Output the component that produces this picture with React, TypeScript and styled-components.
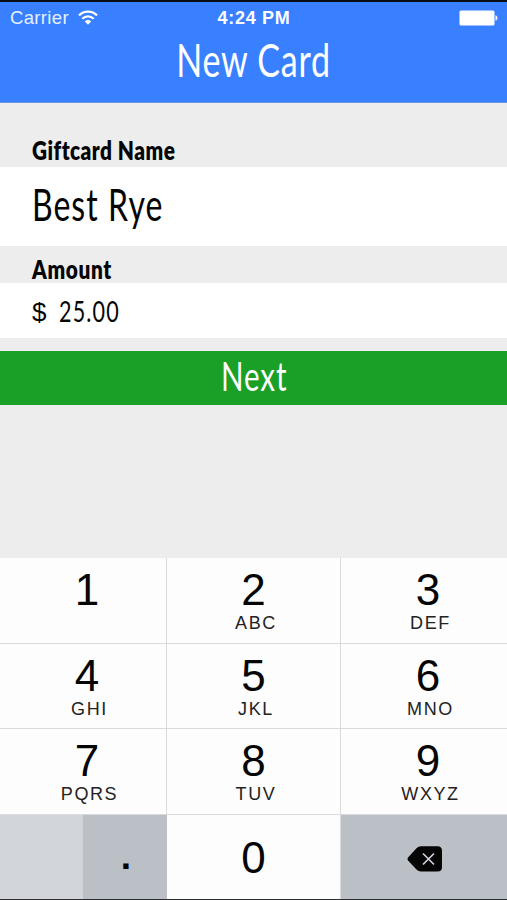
import React from 'react';
import styled, { createGlobalStyle } from 'styled-components';

const GlobalStyle = createGlobalStyle`
  * { box-sizing: border-box; }
  body { margin: 0; background: #ededed; }
`;

const Screen = styled.main`
  width: 507px;
  height: 900px;
  display: flex;
  flex-direction: column;
  overflow: hidden;
  background: #ededed;
  border-top: 2px solid #080d18;
  border-bottom: 1px solid #2c2d30;
  color: #050505;
  font-family: "Liberation Sans", Arial, sans-serif;
`;

const Header = styled.header`
  height: 101px;
  background: #3880ff;
  border-bottom: 1px solid #6b95e2;
  color: #fff;
`;

const StatusBar = styled.div`
  height: 32px;
  display: grid;
  grid-template-columns: 1fr auto 1fr;
  align-items: center;
  padding: 0 9px 0 10px;
`;

const Carrier = styled.div`
  display: flex;
  align-items: center;
  gap: 9px;
  font-size: 18.5px;
  letter-spacing: 0.35px;
  color: #e6f0ff;
`;

const Clock = styled.time`
  padding-top: 1px;
  font-size: 18px;
  font-weight: 700;
  letter-spacing: 0.7px;
`;

const Battery = styled.svg`
  justify-self: end;
`;

const Condensed = styled.span<{
  $size: number;
  $squeeze: number;
  $weight?: number;
  $origin?: string;
  $spacing?: number;
}>`
  display: inline-block;
  font-family: Lato, "Open Sans", sans-serif;
  font-size: ${(p) => p.$size}px;
  font-weight: ${(p) => p.$weight ?? 400};
  letter-spacing: ${(p) => p.$spacing ?? 1}px;
  line-height: 1;
  white-space: nowrap;
  transform: scaleX(${(p) => p.$squeeze});
  transform-origin: ${(p) => p.$origin ?? 'left'} center;
`;

const Title = styled.h1`
  margin: 0;
  height: 51px;
  display: flex;
  align-items: center;
  justify-content: center;
`;

const Label = styled.label<{ $height: number; $bottom: number }>`
  height: ${(p) => p.$height}px;
  display: flex;
  align-items: flex-end;
  padding: 0 0 ${(p) => p.$bottom}px 32px;
`;

const Field = styled.div<{ $height: number; $lift?: number }>`
  height: ${(p) => p.$height}px;
  display: flex;
  align-items: center;
  padding: 0 0 ${(p) => p.$lift ?? 0}px 32px;
  background: #fff;
`;

const Currency = styled.span`
  width: 27px;
  padding-top: 3px;
  font-size: 26px;
  line-height: 1;
`;

const NextButton = styled.button`
  height: 54px;
  margin: 13px 0 0;
  padding: 0 0 5px 2px;
  display: flex;
  align-items: center;
  justify-content: center;
  border: 0;
  background: #1ba027;
  color: #fff;
`;

const Keypad = styled.div`
  margin-top: auto;
  height: 341px;
  display: grid;
  grid-template-columns: 166px 173px 166px;
  grid-template-rows: 85px 84px 85px 84px;
  gap: 1px;
  background: #d9dadc;
`;

const Key = styled.button<{ $shift: number; $plain?: boolean }>`
  display: flex;
  flex-direction: column;
  align-items: center;
  border: 0;
  margin: 0;
  padding: ${(p) => (p.$plain ? 21 : 10)}px 0 0 ${(p) => p.$shift}px;
  background: #fdfdfd;
  color: #050505;
  font-family: inherit;
`;

const Digit = styled.span`
  font-size: 44px;
  line-height: 44px;
`;

const Letters = styled.span`
  margin-top: 1px;
  padding-left: 5px;
  font-size: 18px;
  line-height: 20px;
  letter-spacing: 1.6px;
  color: #222;
`;

const SplitKey = styled.div`
  display: grid;
  grid-template-columns: 83px 84px;
  margin-right: -1px;
`;

const BlankKey = styled.div`
  background: #d2d5da;
`;

const PointKey = styled.button`
  border: 0;
  padding: 0 0 0 2px;
  background: #bbbfc6;
  color: #050505;
  font: 700 37px/72px "Liberation Sans", Arial, sans-serif;
`;

const DeleteKey = styled.button`
  display: flex;
  align-items: center;
  justify-content: center;
  border: 0;
  padding: 4px 0 0 2px;
  background: #bbbfc6;
`;

const keys: [string, string][] = [
  ['1', ''], ['2', 'ABC'], ['3', 'DEF'],
  ['4', 'GHI'], ['5', 'JKL'], ['6', 'MNO'],
  ['7', 'PQRS'], ['8', 'TUV'], ['9', 'WXYZ'],
];
const columnShift = [8, 0, 8];

function WifiIcon() {
  return (
    <svg width="20" height="16" viewBox="0 0 20 16" fill="none" stroke="#fff" strokeWidth="2.2">
      <path d="M1 5.4C6 .3 14 .3 19 5.4" />
      <path d="M4.3 8.8c3.2-3.2 8.2-3.2 11.4 0" />
      <path d="M6.8 11.4c1.8-1.8 4.6-1.8 6.4 0L10 14.8z" fill="#fff" stroke="none" />
    </svg>
  );
}

export default function App() {
  return (
    <>
      <GlobalStyle />
      <Screen>
        <Header>
          <StatusBar>
            <Carrier>Carrier <WifiIcon /></Carrier>
            <Clock>4:24 PM</Clock>
            <Battery width="39" height="16" viewBox="0 0 39 16" fill="#fff">
              <rect x="0.5" y="0.5" width="35" height="15" rx="1.5" />
              <path d="M36.5 5.2c2.6.8 2.6 4.8 0 5.6z" />
            </Battery>
          </StatusBar>
          <Title><Condensed $size={47} $squeeze={0.725} $origin="center">New Card</Condensed></Title>
        </Header>
        <Label $height={64} $bottom={4}>
          <Condensed $size={26} $squeeze={0.8} $weight={800} $spacing={0.6}>Giftcard Name</Condensed>
        </Label>
        <Field $height={79} $lift={3}><Condensed $size={43.5} $squeeze={0.735} $spacing={1.4}>Best Rye</Condensed></Field>
        <Label $height={37} $bottom={1}>
          <Condensed $size={26} $squeeze={0.8} $weight={800} $spacing={0.8}>Amount</Condensed>
        </Label>
        <Field $height={55}>
          <Currency>$</Currency>
          <Condensed $size={28} $squeeze={0.77} $spacing={1.5}>25.00</Condensed>
        </Field>
        <NextButton><Condensed $size={41} $squeeze={0.72} $origin="center" $spacing={1.3}>Next</Condensed></NextButton>
        <Keypad>
          {keys.map(([digit, letters], i) => (
            <Key key={digit} $shift={columnShift[i % 3]}>
              <Digit>{digit}</Digit>
              {letters && <Letters>{letters}</Letters>}
            </Key>
          ))}
          <SplitKey>
            <BlankKey />
            <PointKey>.</PointKey>
          </SplitKey>
          <Key $shift={0} $plain><Digit>0</Digit></Key>
          <DeleteKey aria-label="Delete">
            <svg width="36" height="26" viewBox="0 0 36 26">
              <path d="M1 11.4 9.5 2.3Q11.5.3 14 .3H30.5Q35 .3 35 4.8V21Q35 25.5 30.5 25.5H14Q11.5 25.5 9.5 23.5L1 14.4Q0 12.9 1 11.4Z" fill="#050505" />
              <path d="M16 7.5 27 18.5M27 7.5 16 18.5" stroke="#d4d7dc" strokeWidth="1.6" />
            </svg>
          </DeleteKey>
        </Keypad>
      </Screen>
    </>
  );
}
